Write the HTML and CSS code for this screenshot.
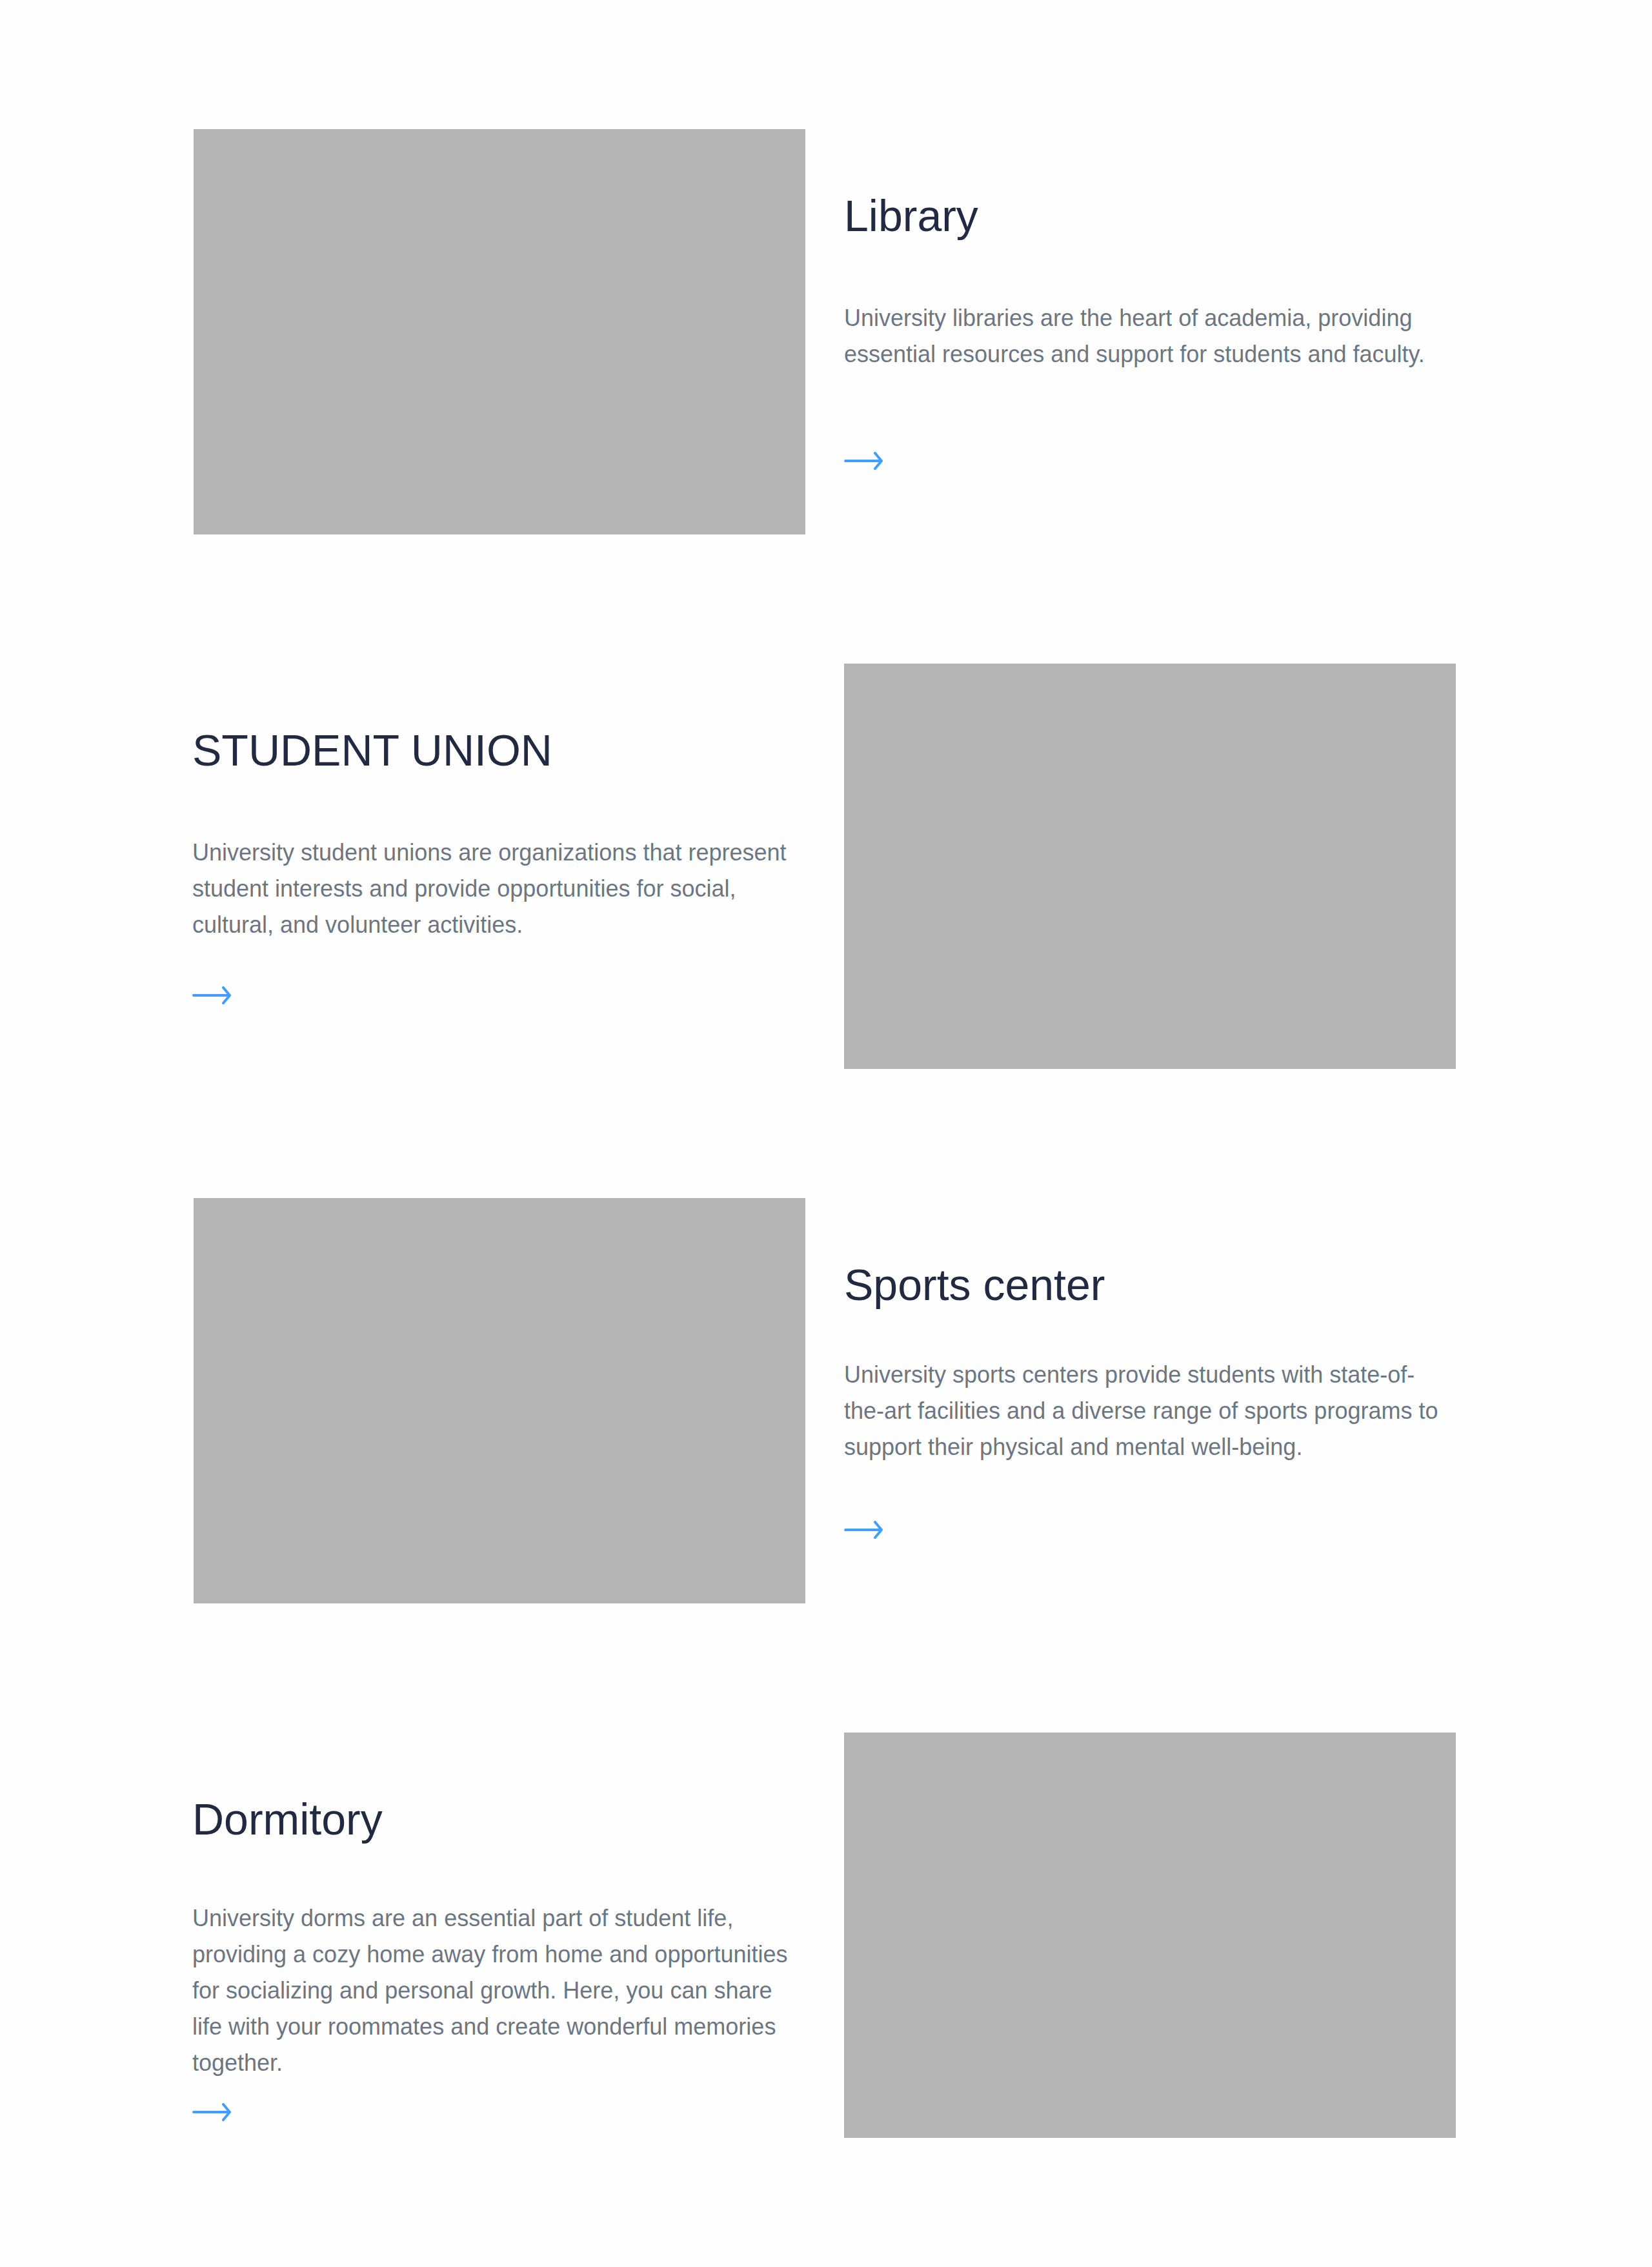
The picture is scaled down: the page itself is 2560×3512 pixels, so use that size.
FILE: index.html
```html
<!DOCTYPE html>
<html lang="en">
<head>
  <meta charset="utf-8">
  <meta name="viewport" content="width=device-width, initial-scale=1">
  <title>Campus facilities</title>
  <link rel="stylesheet" href="styles.css">
</head>
<body>
  <main class="facilities">
    <section class="facility">
      <div class="facility-media"></div>
      <div class="facility-copy">
        <h2 class="facility-title">Library</h2>
        <p class="facility-text">University libraries are the heart of academia, providing essential resources and support for students and faculty.</p>
        <a class="facility-link" href="#library" aria-label="More about the library">
          <svg class="arrow" viewBox="0 0 60 28" aria-hidden="true"><path d="M2 14H58M48 2L58 14L48 26"/></svg>
        </a>
      </div>
    </section>

    <section class="facility facility-reverse">
      <div class="facility-copy">
        <h2 class="facility-title">STUDENT UNION</h2>
        <p class="facility-text">University student unions are organizations that represent student interests and provide opportunities for social, cultural, and volunteer activities.</p>
        <a class="facility-link" href="#student-union" aria-label="More about the student union">
          <svg class="arrow" viewBox="0 0 60 28" aria-hidden="true"><path d="M2 14H58M48 2L58 14L48 26"/></svg>
        </a>
      </div>
      <div class="facility-media"></div>
    </section>

    <section class="facility">
      <div class="facility-media"></div>
      <div class="facility-copy copy-compact">
        <h2 class="facility-title">Sports center</h2>
        <p class="facility-text">University sports centers provide students with state-of-the-art facilities and a diverse range of sports programs to support their physical and mental well-being.</p>
        <a class="facility-link" href="#sports-center" aria-label="More about the sports center">
          <svg class="arrow" viewBox="0 0 60 28" aria-hidden="true"><path d="M2 14H58M48 2L58 14L48 26"/></svg>
        </a>
      </div>
    </section>

    <section class="facility facility-reverse">
      <div class="facility-copy copy-long">
        <h2 class="facility-title">Dormitory</h2>
        <p class="facility-text">University dorms are an essential part of student life, providing a cozy home away from home and opportunities for socializing and personal growth. Here, you can share life with your roommates and create wonderful memories together.</p>
        <a class="facility-link" href="#dormitory" aria-label="More about the dormitory">
          <svg class="arrow" viewBox="0 0 60 28" aria-hidden="true"><path d="M2 14H58M48 2L58 14L48 26"/></svg>
        </a>
      </div>
      <div class="facility-media"></div>
    </section>
  </main>
</body>
</html>
```
FILE: styles.css
```css
* {
  box-sizing: border-box;
}

body {
  margin: 0;
  background: #fefefe;
  color: #6b7685;
  font-family: "Liberation Sans", Arial, Helvetica, sans-serif;
}

.facilities {
  display: grid;
  grid-template-columns: minmax(0, 1fr);
  gap: 200px;
  padding: 200px 304px 200px 298px;
}

.facility {
  display: grid;
  grid-template-columns: minmax(0, 948fr) minmax(0, 948fr);
  gap: 60px;
  padding-left: 2px;
}

.facility-reverse {
  grid-template-columns: minmax(0, 950fr) minmax(0, 948fr);
  padding-left: 0;
}

.facility-media {
  align-self: start;
  width: 100%;
  aspect-ratio: 948 / 628;
  background: #b4b4b4;
}

.facility-copy {
  display: flex;
  flex-direction: column;
  align-items: flex-start;
  padding: 94px 20px 100px 0;
}

.facility-title {
  margin: 0 0 91px;
  color: #212a41;
  font-size: 68px;
  font-weight: 400;
  line-height: 80px;
}

.facility-text {
  margin: 0;
  font-size: 36px;
  line-height: 56px;
}

.facility-link {
  display: block;
  margin-top: auto;
}

/* Tighter spacing under the title */
.copy-compact .facility-title {
  margin-bottom: 72px;
}

/* Five-line description: the link sits close to the bottom edge */
.copy-long {
  padding-bottom: 26px;
}

.copy-long .facility-title {
  margin-bottom: 86px;
}

.arrow {
  display: block;
  width: 60px;
  height: 28px;
  fill: none;
  stroke: #409eff;
  stroke-width: 4;
  stroke-linecap: round;
  stroke-linejoin: round;
}
```
